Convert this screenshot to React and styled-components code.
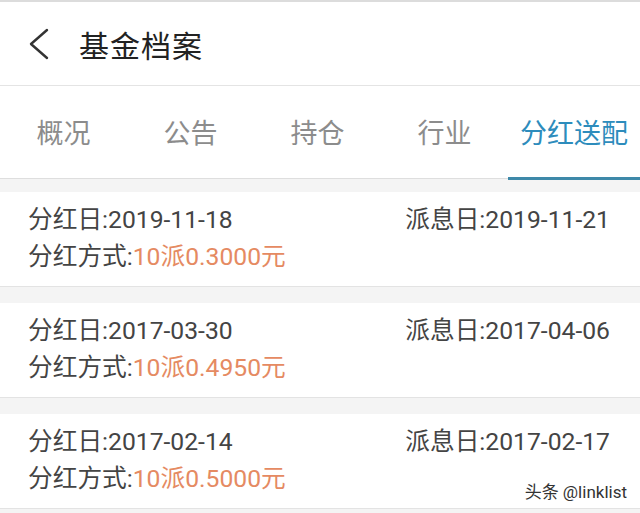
import React from "react";
import styled, { createGlobalStyle } from "styled-components";

const GlobalStyle = createGlobalStyle`
  html, body {
    margin: 0;
    padding: 0;
    background: #f4f4f4;
    font-family: Roboto, "Noto Sans CJK SC", "Noto Sans", sans-serif;
  }
`;

const tabs = ["概况", "公告", "持仓", "行业", "分红送配"];

const records = [
  { date: "2019-11-18", pay: "2019-11-21", plan: "10派0.3000元" },
  { date: "2017-03-30", pay: "2017-04-06", plan: "10派0.4950元" },
  { date: "2017-02-14", pay: "2017-02-17", plan: "10派0.5000元" },
];

const App = () => {
  return (
    <Page>
      <GlobalStyle />
      <Header>
        <BackIcon viewBox="0 0 22 32">
          <path d="M19 2 L3 16 L19 30" />
        </BackIcon>
        <Title>基金档案</Title>
      </Header>

      <TabBar>
        {tabs.map((t, i) => (
          <Tab key={t} active={i === tabs.length - 1}>
            {t}
          </Tab>
        ))}
      </TabBar>

      <List>
        {records.map((r) => (
          <Card key={r.date}>
            <Line>
              <span>分红日:{r.date}</span>
              <span>派息日:{r.pay}</span>
            </Line>
            <Line>
              <span>
                分红方式:<Amount>{r.plan}</Amount>
              </span>
            </Line>
          </Card>
        ))}
      </List>

      <Watermark>头条 @linklist</Watermark>
    </Page>
  );
};

export default App;

const Page = styled.div`
  position: relative;
  min-height: 513px;
  border-top: 2px solid #dcdcdc;
  box-sizing: border-box;
  background: #f4f4f4;
`;

const Header = styled.div`
  height: 83px;
  background: #fff;
  border-bottom: 1px solid #e4e4e4;
  display: flex;
  align-items: center;
  padding-left: 28px;
`;

const BackIcon = styled.svg`
  width: 22px;
  height: 32px;
  margin-right: 29px;
  fill: none;
  stroke: #333;
  stroke-width: 2.4;
  stroke-linecap: round;
  stroke-linejoin: round;
`;

const Title = styled.div`
  font-size: 30px;
  color: #222;
  letter-spacing: 1px;
`;

const TabBar = styled.div`
  height: 92px;
  background: #fff;
  border-bottom: 1px solid #dedede;
  display: grid;
  grid-template-columns: repeat(4, 127px) 1fr;
`;

const Tab = styled.div`
  position: relative;
  display: flex;
  align-items: center;
  justify-content: center;
  padding-bottom: 2px;
  font-size: 27px;
  color: ${(p) => (p.active ? "#2d8cbc" : "#8c8c8c")};

  &::after {
    content: "";
    display: ${(p) => (p.active ? "block" : "none")};
    position: absolute;
    left: 0;
    right: 0;
    bottom: -2px;
    height: 3px;
    background: #3e89a9;
  }
`;

const List = styled.div`
  padding-top: 13px;
  display: flex;
  flex-direction: column;
  gap: 16px;
`;

const Card = styled.div`
  background: #fff;
  border-bottom: 1px solid #e3e3e3;
  padding: 9px 30px 11px 28px;
  font-size: 24.7px;
  color: #444;
`;

const Line = styled.div`
  display: flex;
  justify-content: space-between;
  line-height: 37px;
  white-space: nowrap;
`;

const Amount = styled.span`
  color: #e58a62;
`;

const Watermark = styled.div`
  position: absolute;
  right: 13px;
  top: 476px;
  font-size: 17px;
  color: #333;
  text-shadow: 0 0 2px #fff;
`;
